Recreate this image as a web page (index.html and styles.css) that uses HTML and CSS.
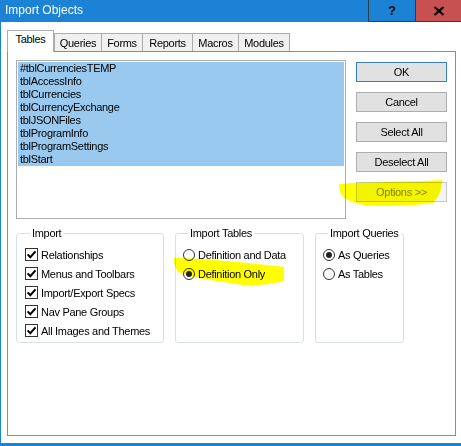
FILE: index.html
```html
<!DOCTYPE html>
<html>
<head>
<meta charset="utf-8">
<link rel="stylesheet" href="styles.css">
</head>
<body>
<div class="window">
  <div class="titlebar">
    <span class="title">Import Objects</span>
    <div class="tb-btns">
      <div class="tb-help">?</div>
      <div class="tb-close">
        <svg width="12" height="10" viewBox="0 0 12 10"><path d="M1.5 1 L10.5 9 M10.5 1 L1.5 9" stroke="#000" stroke-width="2.2" fill="none"/></svg>
      </div>
    </div>
  </div>
  <div class="body">
    <div class="tabs">
      <div class="tab active w-tables">Tables</div>
      <div class="tab w-queries">Queries</div>
      <div class="tab w-forms">Forms</div>
      <div class="tab w-reports">Reports</div>
      <div class="tab w-macros">Macros</div>
      <div class="tab w-modules">Modules</div>
    </div>
    <div class="panel">
      <div class="top-row">
        <div class="listbox">
          <div class="item">#tblCurrenciesTEMP</div>
          <div class="item">tblAccessInfo</div>
          <div class="item">tblCurrencies</div>
          <div class="item">tblCurrencyExchange</div>
          <div class="item">tblJSONFiles</div>
          <div class="item">tblProgramInfo</div>
          <div class="item">tblProgramSettings</div>
          <div class="item">tblStart</div>
        </div>
        <div class="buttons">
          <div class="btn default">OK</div>
          <div class="btn">Cancel</div>
          <div class="btn">Select All</div>
          <div class="btn">Deselect All</div>
          <div class="btn disabled">Options &gt;&gt;</div>
        </div>
      </div>
      <div class="groups">
        <fieldset class="group g-import">
          <legend>Import</legend>
          <div class="opt"><span class="chk"><svg width="11" height="11" viewBox="0 0 11 11"><path d="M1.6 5.4 L4.3 8.2 L9.5 2.4" stroke="#000" stroke-width="2" fill="none"/></svg></span>Relationships</div>
          <div class="opt"><span class="chk"><svg width="11" height="11" viewBox="0 0 11 11"><path d="M1.6 5.4 L4.3 8.2 L9.5 2.4" stroke="#000" stroke-width="2" fill="none"/></svg></span>Menus and Toolbars</div>
          <div class="opt"><span class="chk"><svg width="11" height="11" viewBox="0 0 11 11"><path d="M1.6 5.4 L4.3 8.2 L9.5 2.4" stroke="#000" stroke-width="2" fill="none"/></svg></span>Import/Export Specs</div>
          <div class="opt"><span class="chk"><svg width="11" height="11" viewBox="0 0 11 11"><path d="M1.6 5.4 L4.3 8.2 L9.5 2.4" stroke="#000" stroke-width="2" fill="none"/></svg></span>Nav Pane Groups</div>
          <div class="opt"><span class="chk"><svg width="11" height="11" viewBox="0 0 11 11"><path d="M1.6 5.4 L4.3 8.2 L9.5 2.4" stroke="#000" stroke-width="2" fill="none"/></svg></span>All Images and Themes</div>
        </fieldset>
        <fieldset class="group g-tables">
          <legend>Import Tables</legend>
          <div class="opt"><span class="radio"></span>Definition and Data</div>
          <div class="opt"><span class="radio on"></span>Definition Only</div>
        </fieldset>
        <fieldset class="group g-queries">
          <legend>Import Queries</legend>
          <div class="opt"><span class="radio on"></span>As Queries</div>
          <div class="opt"><span class="radio"></span>As Tables</div>
        </fieldset>
      </div>
    </div>
  </div>
  <svg class="marker" width="461" height="446" viewBox="0 0 461 446">
    <path d="M339 184 C362 182 410 182 442 180 C442 188 440 196 433 203 C412 206 382 207 364 205 C354 203 346 200 342 196 C340 192 339 188 339 184 Z" fill="#ffff00"/>
    <path d="M174 258 C200 258 242 262 284 267 L284 281 C270 285 250 287 230 283 C210 280 190 277 178 272 C175 268 174 263 174 258 Z" fill="#ffff00"/>
  </svg>
</div>
</body>
</html>
```

FILE: styles.css
```css
html, body {
  margin: 0;
  padding: 0;
  background: #ffffff;
}

.window {
  position: relative;
  width: 460px;
  height: 443px;
  background: #ffffff;
  border-left: 1px solid #1b82d5;
  border-bottom: 3px solid #1b82d5;
  font-family: "Liberation Sans", Arial, sans-serif;
  font-size: 11px;
  letter-spacing: -0.3px;
  color: #000;
  overflow: hidden;
}

.titlebar {
  height: 22px;
  background: #1b82d5;
  display: flex;
  align-items: stretch;
  justify-content: space-between;
  margin-left: -1px;
}

.title {
  color: #ffffff;
  font-size: 12px;
  letter-spacing: 0;
  line-height: 20px;
  padding-left: 5px;
}

.tb-btns {
  display: flex;
  border-left: 1px solid #2c3e50;
  border-bottom: 1px solid #2c3e50;
  height: 21px;
}

.tb-help {
  width: 46px;
  background: #1b82d5;
  border-right: 1px solid #2c3e50;
  display: flex;
  align-items: center;
  justify-content: center;
  font-weight: bold;
  font-size: 13px;
  letter-spacing: 0;
  color: #000;
}

.tb-close {
  width: 45px;
  background: #c75050;
  display: flex;
  align-items: center;
  justify-content: center;
}

.body {
  padding-left: 6px;
}

.tabs {
  display: flex;
  align-items: flex-end;
  height: 21px;
  margin-top: 8px;
}

.tab {
  box-sizing: border-box;
  height: 18px;
  border: 1px solid #acacac;
  border-bottom: none;
  background: #f0f0f0;
  margin-left: -1px;
  text-align: center;
  line-height: 17px;
  padding-top: 1px;
}

.tab.active {
  height: 22px;
  background: #ffffff;
  margin-left: 0;
  margin-bottom: -1px;
  position: relative;
  z-index: 1;
  line-height: 17px;
  padding-top: 0;
}

.w-tables { width: 47px; }
.w-queries { width: 48px; margin-left: 0; }
.w-forms { width: 42px; }
.w-reports { width: 51px; }
.w-macros { width: 47px; }
.w-modules { width: 52px; }

.panel {
  box-sizing: border-box;
  width: 449px;
  height: 385px;
  border: 1px solid #8d8d8d;
  padding: 8px;
}

.top-row {
  display: flex;
  gap: 10px;
}

.listbox {
  box-sizing: border-box;
  width: 330px;
  height: 159px;
  border: 1px solid #abadb3;
  padding: 1px;
}

.item {
  height: 13px;
  line-height: 13px;
  padding-left: 2px;
  background: #99c9ef;
}

.buttons {
  display: flex;
  flex-direction: column;
  gap: 10px;
  margin-top: 2px;
}

.btn {
  box-sizing: border-box;
  width: 91px;
  height: 20px;
  border: 1px solid #adadad;
  background: #e1e1e1;
  text-align: center;
  line-height: 18px;
}

.btn.default {
  border-color: #3a7fba;
}

.btn.disabled {
  background: #f4f4f4;
  border-color: #c6c6c6;
  color: #838383;
}

.groups {
  display: flex;
  align-items: stretch;
  gap: 11px;
  margin-top: 8px;
}

.group {
  margin: 0;
  padding: 5px 0 2px 0;
  border: 1px solid #d8dfe6;
  border-radius: 3px;
  min-width: 0;
  box-sizing: border-box;
}

.group legend {
  padding: 0 2px;
  margin-left: 5px;
  line-height: 13px;
  font-size: 11px;
}

.g-import { width: 148px; padding-left: 8px; }
.g-tables { width: 129px; padding-left: 7px; }
.g-queries { width: 89px; padding-left: 7px; }

.opt {
  height: 19px;
  display: flex;
  align-items: center;
  white-space: nowrap;
}

.chk {
  box-sizing: border-box;
  width: 13px;
  height: 13px;
  border: 1px solid #333333;
  background: #ffffff;
  margin-right: 3px;
  display: flex;
  align-items: center;
  justify-content: center;
}

.chk svg {
  display: block;
}

.radio {
  box-sizing: border-box;
  width: 12px;
  height: 12px;
  border: 1px solid #333333;
  border-radius: 50%;
  background: #ffffff;
  margin-right: 3px;
  display: flex;
  align-items: center;
  justify-content: center;
}

.radio.on::after {
  content: "";
  width: 6px;
  height: 6px;
  border-radius: 50%;
  background: #222222;
}

.marker {
  position: absolute;
  left: -1px;
  top: 0;
  pointer-events: none;
  mix-blend-mode: multiply;
}
```
